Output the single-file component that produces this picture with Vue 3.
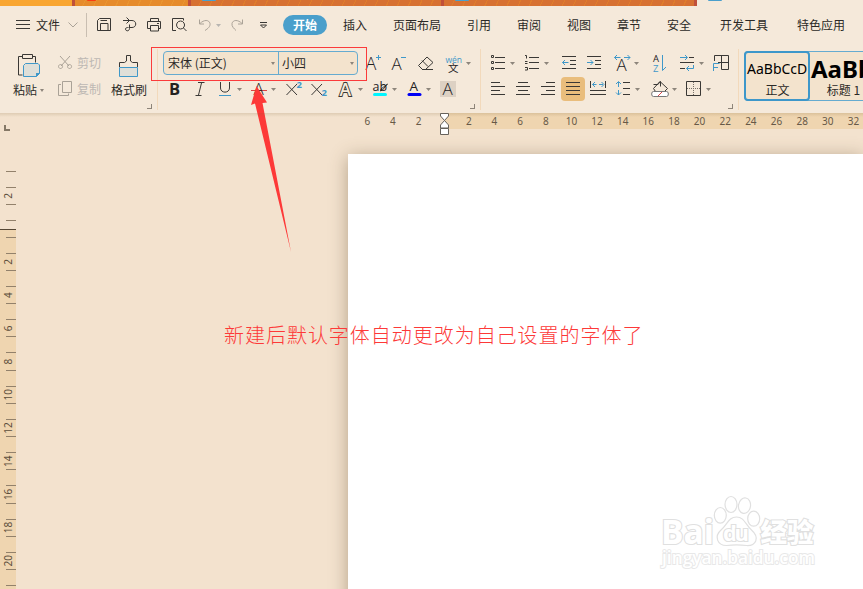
<script setup>
import { ref } from "vue";

const tabs = [
  { name: "开始", width: 44 },
  { name: "插入", width: 56 },
  { name: "页面布局", width: 68 },
  { name: "引用", width: 56 },
  { name: "审阅", width: 44 },
  { name: "视图", width: 56 },
  { name: "章节", width: 44 },
  { name: "安全", width: 56 },
  { name: "开发工具", width: 74 },
  { name: "特色应用", width: 80 },
];
const activeTab = ref("开始");

// icon: x = left edge of the cell, w = cell width, parts = [class, path], texts = [class, x, baseline, size, text]
const quickIcons = [
  {
    x: 92,
    w: 26,
    parts: [
      ["ink", "M97.500 30.500v-10l2-2h11v12zM100.500 30v-6.500h7.500v6.500M100.500 20.500h6.500"],
    ],
  },
  {
    x: 118,
    w: 25,
    parts: [
      ["ink", "M123 20.500h9c5 0 5 7 0 7h-2.500M126.500 17.500l3 3l-3 3M129.500 24.500v4c0 3-4 3-4 .5c0-1.500 2-1.500 3-1.500"],
    ],
  },
  {
    x: 143,
    w: 25,
    parts: [
      ["ink", "M150.500 21v-2.500h8v2.500M150 28.500h-2.500v-7h13v7h-2.500M150.500 25.500h8v5.500h-8zM157 23.500h2"],
    ],
  },
  {
    x: 168,
    w: 26,
    parts: [
      ["ink", "M176 30.500h-3.500v-12h11v2M180.500 21a4 4 0 1 0 .1 0M183.500 28l3 3"],
    ],
  },
  {
    x: 194,
    w: 32,
    caret: 216,
    parts: [["off", "M199.500 19.500v4.500h4.500M200 23.500c4-4 9-4 10 0c.5 3-2 5-5 7"]],
  },
  {
    x: 226,
    w: 26,
    parts: [["off", "M242.500 19.500v4.500h-4.500M242 23.500c-4-4-9-4-10 0c-.5 3 2 5 4 7"]],
  },
  {
    x: 252,
    w: 31,
    parts: [["ink", "M260 22.500h7M260.500 25l3 3l3-3z"]],
  },
];

const fontTop = [
  { x: 358, w: 28, parts: [["blue", "M376 57.500h5M378.500 55v5"]], texts: [["ink", 365.5, 70, 18, "A"]] },
  { x: 386, w: 27, parts: [["blue", "M401 57.500h5"]], texts: [["ink", 391.5, 70, 17, "A"]] },
  { x: 413, w: 29, parts: [["ink", "M422.500 69.500l-4-4l8.500-8.500l6 5.500l-7.500 7M422 60.500l6 6M422 69.500h11"]] },
  { x: 442, w: 34, caret: 466, texts: [["blue wide", 445.5, 63, 8.5, "wén"], ["ink cjk", 448, 71.5, 10.5, "文"]] },
];
const fontBottom = [
  { x: 163, w: 25, texts: [["ink heavy", 169, 95, 16.5, "B"]] },
  { x: 188, w: 25, parts: [["ink", "M198 82.500h6.500M195.500 95.500h6M201.500 83l-3 12"]] },
  { x: 213, w: 33, caret: 237, parts: [["ink", "M220.500 82v6c0 5.500 9 5.500 9 0v-6"], ["blue", "M219 95.500h12"]] },
  { x: 246, w: 34, caret: 271, parts: [["red", "M251 90.500h16"]], texts: [["ink", 253.5, 95, 17, "A"]] },
  { x: 280, w: 26, parts: [["ink", "M286.500 84l10.500 11M297 84l-10.500 11"]], texts: [["blue bold", 296.5, 88, 9.5, "2"]] },
  { x: 306, w: 26, parts: [["ink", "M311.500 84l10.500 11M322 84l-10.500 11"]], texts: [["blue bold", 321.5, 96, 9.5, "2"]] },
  { x: 332, w: 35, caret: 358, texts: [["outline", 339.500, 95.500, 17.500, "A"]] },
  { x: 367, w: 34, caret: 392, parts: [["cyan", "M374.500 94.500h11"], ["ink", "M387.500 84l-5 6l-2 1l.5-2z"]], texts: [["ink wide", 372.5, 91, 12.500, "ab"]] },
  { x: 401, w: 34, caret: 426, parts: [["navy", "M409 94.500h11"]], texts: [["ink wide", 409.5, 91, 13.5, "A"]] },
  { x: 435, w: 30, parts: [["shade", "M440 81h16v16h-16z"]], texts: [["ink", 442.5, 95, 17, "A"]] },
];

const paraTop = [
  { x: 486, w: 34, caret: 510, parts: [["ink", "M495 57.500h10M495 62.500h10M495 68.500h10M491.500 55.500h2v2h-2zM491.500 61.500h2v2h-2zM491.500 67.500h2v2h-2z"]] },
  { x: 520, w: 36, caret: 544, parts: [["ink", "M529 57.500h10M529 62.500h10M529 68.500h10M525 55.500h1.500v3M525 61.500h2.500M525 63.500h2.500M525 67.500h2.500v2.500h-2.500"]] },
  { x: 556, w: 27, parts: [["ink", "M562 56.500h14M570 60.500h6M570 64.500h6M562 68.500h14"], ["blue", "M562.500 62.500h6M565 60l-2.500 2.500l2.500 2.500"]] },
  { x: 583, w: 26, parts: [["ink", "M587 56.500h14M595 60.500h6M595 64.500h6M587 68.500h14"], ["blue", "M587 62.500h6M590.500 60l2.500 2.500l-2.500 2.500"]] },
  { x: 609, w: 37, caret: 634, parts: [["blue", "M614.500 57.500h6M617 55l-2.500 2.500l2.500 2.500M624 57.500h6M627.500 55l2.500 2.500l-2.500 2.500"]], texts: [["ink", 616.5, 71, 17, "A"]] },
  { x: 646, w: 29, parts: [["blue", "M662.500 55v15.500l3.500-3.500"]], texts: [["ink wide", 653, 62, 9.500, "A"], ["blue wide", 653, 71.500, 9.500, "Z"]] },
  { x: 675, w: 34, caret: 699, parts: [["ink", "M689 57.500h5M680 62.500h14M680 68.500h5"], ["blue", "M680 57.500h7M685 55l2.500 2.500l-2.500 2.500M693.500 65v3.500h-7M689 66l-2.500 2.500l2.500 2.500"]] },
  { x: 709, w: 26, parts: [["ink", "M714.500 61v-5.500h14v14h-7M718 62.500h10M721.500 55.500v14"], ["blue", "M713.500 71v-7.500h6M713 67.500h5"]] },
];
const paraBottom = [
  { x: 486, w: 25, parts: [["ink", "M491 82.500h9M491 86.500h14M491 90.500h9M491 94.500h14"]] },
  { x: 511, w: 25, parts: [["ink", "M518 82.500h10M516 86.500h14M518 90.500h10M516 94.500h14"]] },
  { x: 536, w: 25, parts: [["ink", "M546 82.500h9M541 86.500h14M546 90.500h9M541 94.500h14"]] },
  { x: 561, w: 24, on: true, parts: [["ink", "M566 82.500h14M566 86.500h14M566 90.500h14M566 94.500h14"]] },
  { x: 585, w: 26, parts: [["ink", "M590.500 81v7M605.500 81v7M590 90.500h16M590 94.500h16"], ["blue", "M592.500 84.500h4M595 82l-2.500 2.500l2.500 2.500M599 84.500h4M601.500 82l2.500 2.500l-2.500 2.500"]] },
  { x: 611, w: 34, caret: 635, parts: [["ink", "M623 82.500h7M623 88.500h7M623 94.500h7"], ["blue", "M618.500 82v5M616 84l2.500-2.500l2.500 2.500M618.500 90v5M616 92.500l2.500 2.500l2.500-2.500"]] },
  { x: 645, w: 35, caret: 672, parts: [["ink", "M653.500 84.500h4.500l2-3l7.500 7l-3 3M660 81.500l-6.500 7l2 3M660.500 81.500v5"], ["tube", "M653.500 91.500h13a1.500 2 0 0 1 0 5h-13a1.500 2 0 0 1 0-5z"], ["red", "M658 96l4-4"]] },
  { x: 680, w: 40, caret: 706, parts: [["ink", "M686.500 81.500h14v14h-14z"], ["dots", "M693.500 82v13M687 88.500h13"]] },
];
const iconRows = { fontTop, fontBottom, paraTop, paraBottom };

const rulerLeft = [6, 4, 2];
const rulerRight = Array.from({ length: 16 }, (_, i) => (i + 1) * 2);
const ticks = [
  171, 187, 204, 220, 237, 253, 270, 286, 303, 319, 336, 352, 370, 386, 403,
  419, 436, 452, 469, 485, 503, 519, 536, 552, 569, 585,
];
const marks = [[2, 196], ...Array.from({ length: 10 }, (_, i) => [(i + 1) * 2, 262 + i * 33.2])];
</script>

<template>
  <div class="window">
    <div class="doc-tabs">
      <div class="doc-tab home"></div>
      <div class="doc-tab store"><i class="dot red-dot"></i></div>
      <div class="doc-tab file"><i class="dot"></i></div>
      <div class="doc-tab file"><i class="dot"></i></div>
      <div class="doc-tab current"><i class="dot"></i></div>
    </div>

    <header class="menu-bar">
      <button class="file-menu">
        <svg width="16" height="12" viewBox="15 19 16 12">
          <path class="ink" d="M16 20.500h14M16 24.500h14M16 28.500h14" />
        </svg>
        <span>文件</span>
        <svg width="10" height="8" viewBox="68 21 10 8">
          <path class="off" d="M68.500 22.500l4.500 4.500l4.500-4.500" />
        </svg>
      </button>
      <div class="quick">
        <svg v-for="icon in quickIcons" :key="icon.x" :width="icon.w" height="24" :viewBox="`${icon.x} 13 ${icon.w} 24`">
          <path v-for="(part, i) in icon.parts" :key="i" :class="part[0]" :d="part[1]" />
          <path v-if="icon.caret" class="caret pale" :d="`M${icon.caret} 24h5l-2.500 3z`" />
        </svg>
      </div>
      <nav class="tabs">
        <button
          v-for="tab in tabs"
          :key="tab.name"
          class="tab"
          :class="{ active: tab.name === activeTab }"
          :style="{ width: tab.width + 'px' }"
          @click="activeTab = tab.name"
        >
          {{ tab.name }}
        </button>
      </nav>
    </header>

    <section class="ribbon">
      <div class="group clipboard">
        <div class="big paste">
          <svg width="30" height="30" viewBox="14 51 30 30">
            <path class="ink" d="M22 56.500h-3.500v18.500h4M33 56.500h2.500v6M22.500 54.500h10v4h-10z" />
            <path class="sheet" d="M25.500 63.500h12.500l1.500 1.500v8.500l-3 3h-13v-11z" />
            <path class="bluefill" d="M36 77v-4h4z" />
          </svg>
          <span>粘贴<i class="arrow"></i></span>
        </div>
        <div class="small-stack">
          <div class="small">
            <svg width="20" height="20" viewBox="57 53 20 20">
              <path class="off" d="M60 56l9 10M70 56l-9 10M60.500 64.500a2 2 0 1 0 .1 0M69.500 64.500a2 2 0 1 0 .1 0" />
            </svg>
            <span>剪切</span>
          </div>
          <div class="small">
            <svg width="20" height="20" viewBox="57 79 20 20">
              <path class="off" d="M62.500 81.500h9v11h-9zM61 84.500h-2.500v11h10v-2" />
            </svg>
            <span>复制</span>
          </div>
        </div>
        <div class="big brush">
          <svg width="30" height="30" viewBox="114 51 30 30">
            <path class="sheet" d="M119.500 67.500h18v9h-18z" />
            <path class="ink" d="M119.500 67v-4.500h5l2-1.500v-5.500h4v5.500l2 1.500h5v4.500" />
          </svg>
          <span>格式刷</span>
        </div>
        <i class="launcher"></i>
      </div>

      <div class="group font">
        <div class="line">
          <div class="selects">
            <div class="select name"><span>宋体 (正文)</span><i class="arrow"></i></div>
            <div class="select size"><span>小四</span><i class="arrow"></i></div>
          </div>
          <svg v-for="icon in iconRows.fontTop" :key="icon.x" :width="icon.w" height="24" :viewBox="`${icon.x} 51 ${icon.w} 24`">
            <path v-for="(part, i) in icon.parts" :key="i" :class="part[0]" :d="part[1]" />
            <text v-for="(t, i) in icon.texts" :key="'t' + i" :class="t[0]" :x="t[1]" :y="t[2]" :font-size="t[3]">{{ t[4] }}</text>
            <path v-if="icon.caret" class="caret" :d="`M${icon.caret} 62h5l-2.500 3z`" />
          </svg>
        </div>
        <div class="line">
          <svg v-for="icon in iconRows.fontBottom" :key="icon.x" :width="icon.w" height="24" :viewBox="`${icon.x} 77 ${icon.w} 24`">
            <path v-for="(part, i) in icon.parts" :key="i" :class="part[0]" :d="part[1]" />
            <text v-for="(t, i) in icon.texts" :key="'t' + i" :class="t[0]" :x="t[1]" :y="t[2]" :font-size="t[3]">{{ t[4] }}</text>
            <path v-if="icon.caret" class="caret" :d="`M${icon.caret} 88h5l-2.500 3z`" />
          </svg>
        </div>
        <i class="launcher"></i>
      </div>

      <div class="group paragraph">
        <div class="line">
          <svg v-for="icon in iconRows.paraTop" :key="icon.x" :width="icon.w" height="24" :viewBox="`${icon.x} 51 ${icon.w} 24`">
            <path v-for="(part, i) in icon.parts" :key="i" :class="part[0]" :d="part[1]" />
            <text v-for="(t, i) in icon.texts" :key="'t' + i" :class="t[0]" :x="t[1]" :y="t[2]" :font-size="t[3]">{{ t[4] }}</text>
            <path v-if="icon.caret" class="caret" :d="`M${icon.caret} 62h5l-2.500 3z`" />
          </svg>
        </div>
        <div class="line">
          <svg
            v-for="icon in iconRows.paraBottom"
            :key="icon.x"
            :class="{ pressed: icon.on }"
            :width="icon.w"
            height="24"
            :viewBox="`${icon.x} 77 ${icon.w} 24`"
          >
            <path v-for="(part, i) in icon.parts" :key="i" :class="part[0]" :d="part[1]" />
            <path v-if="icon.caret" class="caret" :d="`M${icon.caret} 88h5l-2.500 3z`" />
          </svg>
        </div>
        <i class="launcher"></i>
      </div>

      <div class="styles">
        <div class="style selected">
          <div class="sample">AaBbCcD</div>
          <span>正文</span>
        </div>
        <div class="style">
          <div class="sample heading">AaBb</div>
          <span>标题 1</span>
        </div>
      </div>
    </section>

    <main class="workspace">
      <div class="h-ruler">
        <div class="outside">
          <span v-for="n in rulerLeft" :key="n">{{ n }}</span>
        </div>
        <div class="inside">
          <span v-for="n in rulerRight" :key="n">{{ n }}</span>
        </div>
      </div>
      <div class="page"></div>

      <svg class="v-ruler" width="16" height="476" viewBox="0 113 16 476">
        <rect class="v-active" x="0" y="230" width="16" height="359" />
        <path class="corner" d="M5 125v5h5" />
        <path class="origin" d="M0 229.500h16" />
        <path v-for="y in ticks" :key="y" class="tick" :d="`M6 ${y + 0.5}h10`" />
        <text v-for="m in marks" :key="m[1]" class="mark" :transform="`translate(11.500 ${m[1]}) rotate(-90)`">{{ m[0] }}</text>
      </svg>
      <svg class="indent" width="10" height="22" viewBox="440 113 10 22">
        <path d="M440.500 113.500h8v2.500l-4 4.500l-4-4.500zM444.500 120.500l4 4.500v3h-8v-3zM440.500 128.500h8v6h-8z" />
      </svg>

      <svg class="watermark" width="170" height="85" viewBox="655 490 170 85">
        <text class="latin" x="661" y="543.500" font-size="34" textLength="53" lengthAdjust="spacingAndGlyphs">Bai</text>
        <ellipse cx="720.300" cy="515.300" rx="6" ry="7.800" />
        <ellipse cx="731" cy="504.500" rx="6" ry="8" />
        <ellipse cx="744.500" cy="505.700" rx="6" ry="7.800" transform="rotate(10 744.500 505.700)" />
        <ellipse cx="753.700" cy="518.700" rx="6" ry="7.500" />
        <path d="M736.500 517c8 0 9 8 15 13c9 8 4 16-5 15.500c-7-1-13-1-20 0c-9 0-13-9-5-16c6-5 7-12.500 15-12.500z" />
        <text class="latin" x="723" y="541" font-size="22" textLength="26">du</text>
        <text class="han" x="760.500" y="542" font-size="26.500">经验</text>
        <text class="latin url" x="662" y="563.500" font-size="18" textLength="153" lengthAdjust="spacingAndGlyphs">jingyan.baidu.com</text>
      </svg>
    </main>

    <div class="red-frame"></div>
    <svg class="pointer" width="50" height="175" viewBox="246 83 50 175">
      <path d="M256.500 86l10.500 16.500l-4.500 .5l28.500 149l-36-148.500l-4 1.500z" />
    </svg>
    <p class="note">新建后默认字体自动更改为自己设置的字体了</p>
  </div>
</template>

<style>
body {
  margin: 0;
  overflow: hidden;
}
</style>

<style scoped>
.window {
  position: relative;
  width: 863px;
  height: 589px;
  overflow: hidden;
  background: #f5e9da;
  color: #2b2927;
  font: 12px/16px "Noto Sans CJK SC", sans-serif;
}

svg {
  display: block;
  flex: none;
}

button {
  padding: 0;
  border: 0;
  background: none;
  color: inherit;
  font: inherit;
}

/* document tabs */
.doc-tabs {
  display: flex;
  height: 6px;
}

.doc-tab {
  box-sizing: border-box;
  flex: none;
  width: 253px;
  border-right: 3px solid #c0503a;
}

.doc-tab.home {
  width: 75px;
  background: #f9a631;
}

.doc-tab.store {
  width: 116px;
  background: repeating-linear-gradient(115deg, #e68b2b 0 9px, #e99530 9px 10px);
}

.doc-tab.file {
  background: repeating-linear-gradient(115deg, #d77132 0 9px, #df7d2c 9px 10px);
}

.doc-tab.current {
  border: 0;
}

.dot {
  display: block;
  width: 14px;
  height: 1px;
  margin-left: 11px;
  border-radius: 0 0 4px 4px;
  background: #4a9fcc;
}

.red-dot {
  width: 9px;
  margin-left: 12px;
  background: #fb3b12;
}

/* menu bar */
.menu-bar {
  display: flex;
  align-items: center;
  height: 38px;
}

.file-menu {
  display: flex;
  flex: none;
  align-items: center;
  box-sizing: border-box;
  width: 87px;
  height: 24px;
  padding-left: 15px;
  border-right: 1px solid #c9beb1;
}

.file-menu span {
  margin: 0 8px 0 5px;
}

.quick {
  display: flex;
  flex: none;
  margin-left: 5px;
}

.tabs {
  display: flex;
  flex: none;
}

/* each title is centred in its own hit area */
.tab {
  flex: none;
  height: 20px;
  line-height: 20px;
  text-align: center;
  white-space: nowrap;
}

.tab:nth-child(n + 3) {
  margin-left: 0;
}

.tab.active {
  border-radius: 10px;
  background: #4a9fcb;
  color: #fff;
  font-weight: bold;
}

/* ribbon */
.ribbon {
  display: flex;
  height: 69px;
}

.group {
  position: relative;
  box-sizing: border-box;
  flex: none;
  height: 61px;
  margin-top: 5px;
  padding-top: 2px;
  border-right: 1px solid #f2d9bb;
}

.clipboard {
  display: flex;
  width: 158px;
  padding-left: 13px;
}

.font {
  width: 323px;
  padding-left: 5px;
}

.paragraph {
  width: 258px;
  padding-left: 5px;
}

.line {
  display: flex;
  height: 26px;
}

.pressed {
  border-radius: 4px;
  background: #e9bd7c;
}

.launcher {
  position: absolute;
  right: 5px;
  bottom: 1px;
  width: 4px;
  height: 4px;
  border: solid #8d8479;
  border-width: 0 1px 1px 0;
}

.big {
  display: flex;
  flex: none;
  flex-direction: column;
  white-space: nowrap;
}

.big span {
  display: flex;
  align-items: center;
  margin-top: 1px;
}

.paste {
  width: 44px;
}

.paste svg {
  margin-left: 1px;
}

.brush {
  width: 40px;
  margin-left: 1px;
}

.brush svg {
  margin-left: 3px;
}

.small-stack {
  display: flex;
  flex: none;
  flex-direction: column;
  gap: 6px;
  width: 53px;
  padding-top: 2px;
}

.small {
  display: flex;
  align-items: center;
  height: 20px;
  color: #bdb8b3;
}

.arrow {
  width: 0;
  height: 0;
  margin-left: 3px;
  border: 2.5px solid transparent;
  border-top: 3px solid #8d857b;
  border-bottom: 0;
}

.selects {
  display: flex;
  flex: none;
  box-sizing: border-box;
  width: 195px;
  height: 24px;
  border: 1px solid #65abd0;
  border-radius: 4px;
  background: #f3e3cd;
}

.select {
  display: flex;
  align-items: center;
  justify-content: space-between;
  box-sizing: border-box;
  padding: 0 3px 0 4px;
}

.select.name {
  width: 115px;
  border-right: 1px solid #65abd0;
}

.select.size {
  width: 78px;
  padding-left: 3px;
}

.styles {
  display: flex;
  box-sizing: border-box;
  flex: none;
  width: 140px;
  height: 50px;
  margin: 7px 0 0 5px;
  border: 1px solid #65abd0;
  border-radius: 4px;
  background: #f3e3cd;
}

.style {
  box-sizing: border-box;
  width: 66px;
  height: 48px;
  padding: 4px 0 0 1px;
  text-align: center;
  white-space: nowrap;
  overflow: hidden;
}

.style.selected {
  height: 50px;
  margin: -1px 0 0 -1px;
  padding: 3px 0 0 1px;
  border: 2px solid #3d97ca;
  border-radius: 4px;
}

.sample {
  height: 26px;
  color: #000;
  font: 14px/25px "Noto Sans", sans-serif;
  text-align: left;
}

.heading {
  font: bold 24px/25px "Noto Sans", sans-serif;
}

/* icon strokes */
.ink,
.off,
.blue,
.red,
.dots {
  fill: none;
  stroke: #3a3835;
}

.off {
  stroke: #aaa297;
}

.blue {
  stroke: #3f98c9;
}

.red {
  stroke: #dc4545;
}

.dots {
  stroke: #777068;
  stroke-dasharray: 1 1;
}

.cyan,
.navy {
  fill: none;
  stroke: #00f5ff;
  stroke-width: 3;
  stroke-linecap: round;
}

.navy {
  stroke: #0000f5;
}

.shade {
  fill: #ddd1c3;
}

.sheet {
  fill: #dfdfd8;
  stroke: #3f98c9;
}

.bluefill {
  fill: #3f98c9;
}

.tube {
  fill: #fff;
  stroke: #777;
}

.caret {
  fill: #8d857b;
}

.pale {
  fill: #b8b5b1;
}

text {
  font-family: "Open Sans", sans-serif;
  font-weight: 300;
}

text.ink {
  fill: #24221f;
  stroke: none;
}

text.blue {
  fill: #3f98c9;
  stroke: none;
}

text.wide {
  font-weight: 400;
}

text.bold,
text.heavy {
  font-weight: 700;
}

text.cjk {
  font-family: "Noto Sans CJK SC", sans-serif;
  font-weight: 400;
}

text.outline {
  fill: #f5e9da;
  stroke: #3a3835;
  stroke-width: 1.8;
  paint-order: stroke;
  font-weight: 600;
}

/* workspace */
.workspace {
  position: relative;
  height: 476px;
  overflow: hidden;
  background: #f3e2ce;
}

.workspace::before {
  content: "";
  position: absolute;
  z-index: 1;
  width: 100%;
  height: 4px;
  background: linear-gradient(rgba(120, 95, 50, 0.17), transparent);
}

.h-ruler {
  display: flex;
  height: 16px;
  color: #675947;
  font: 10px/16px "Noto Sans", sans-serif;
}

.h-ruler span {
  flex: none;
  width: 25.65px;
  text-align: center;
}

.outside {
  display: flex;
  box-sizing: border-box;
  width: 444px;
  padding-left: 354.500px;
}

.inside {
  display: flex;
  box-sizing: border-box;
  width: 419px;
  padding-left: 12px;
  background: #efd5b0;
}

.page {
  height: 500px;
  margin: 25px 0 0 348px;
  background: #fff;
  box-shadow: 0 3px 17px rgba(105, 85, 55, 0.46);
}

.v-ruler,
.indent {
  position: absolute;
  top: 0;
  left: 0;
}

.indent {
  left: 440px;
  z-index: 2;
  fill: #fff;
  stroke: #67625b;
}

.v-active {
  fill: #efd5b0;
}

.tick,
.corner,
.origin {
  fill: none;
  stroke: #92816b;
}

.corner {
  stroke: #857866;
  stroke-width: 2;
}

.origin {
  stroke: #564835;
}

.mark {
  fill: #5c4e3c;
  font: 10px "Noto Sans", sans-serif;
  text-anchor: middle;
}

.watermark {
  position: absolute;
  top: 377px;
  left: 655px;
  fill: #fff;
  stroke: #e0e0e0;
  stroke-width: 1.2;
}

.watermark text {
  stroke-width: 2.2;
  paint-order: stroke;
}

.watermark .url {
  stroke: #e8e8e8;
  stroke-width: 2;
  font-weight: 600;
}

.latin {
  font-family: "Open Sans", sans-serif;
  font-weight: 700;
}

.han {
  font-family: "Noto Sans CJK SC", sans-serif;
  font-weight: 900;
}

/* annotation layer */
.red-frame {
  position: absolute;
  top: 47px;
  left: 151px;
  box-sizing: border-box;
  width: 216px;
  height: 34px;
  border: 1px solid #fb3b3b;
}

.pointer {
  position: absolute;
  top: 83px;
  left: 246px;
  fill: #fd3938;
}

.note {
  position: absolute;
  top: 321px;
  left: 224px;
  margin: 0;
  color: #fd3938;
  font-size: 20px;
  font-weight: 300;
  line-height: 28px;
  letter-spacing: 0.97px;
  white-space: nowrap;
}
</style>
